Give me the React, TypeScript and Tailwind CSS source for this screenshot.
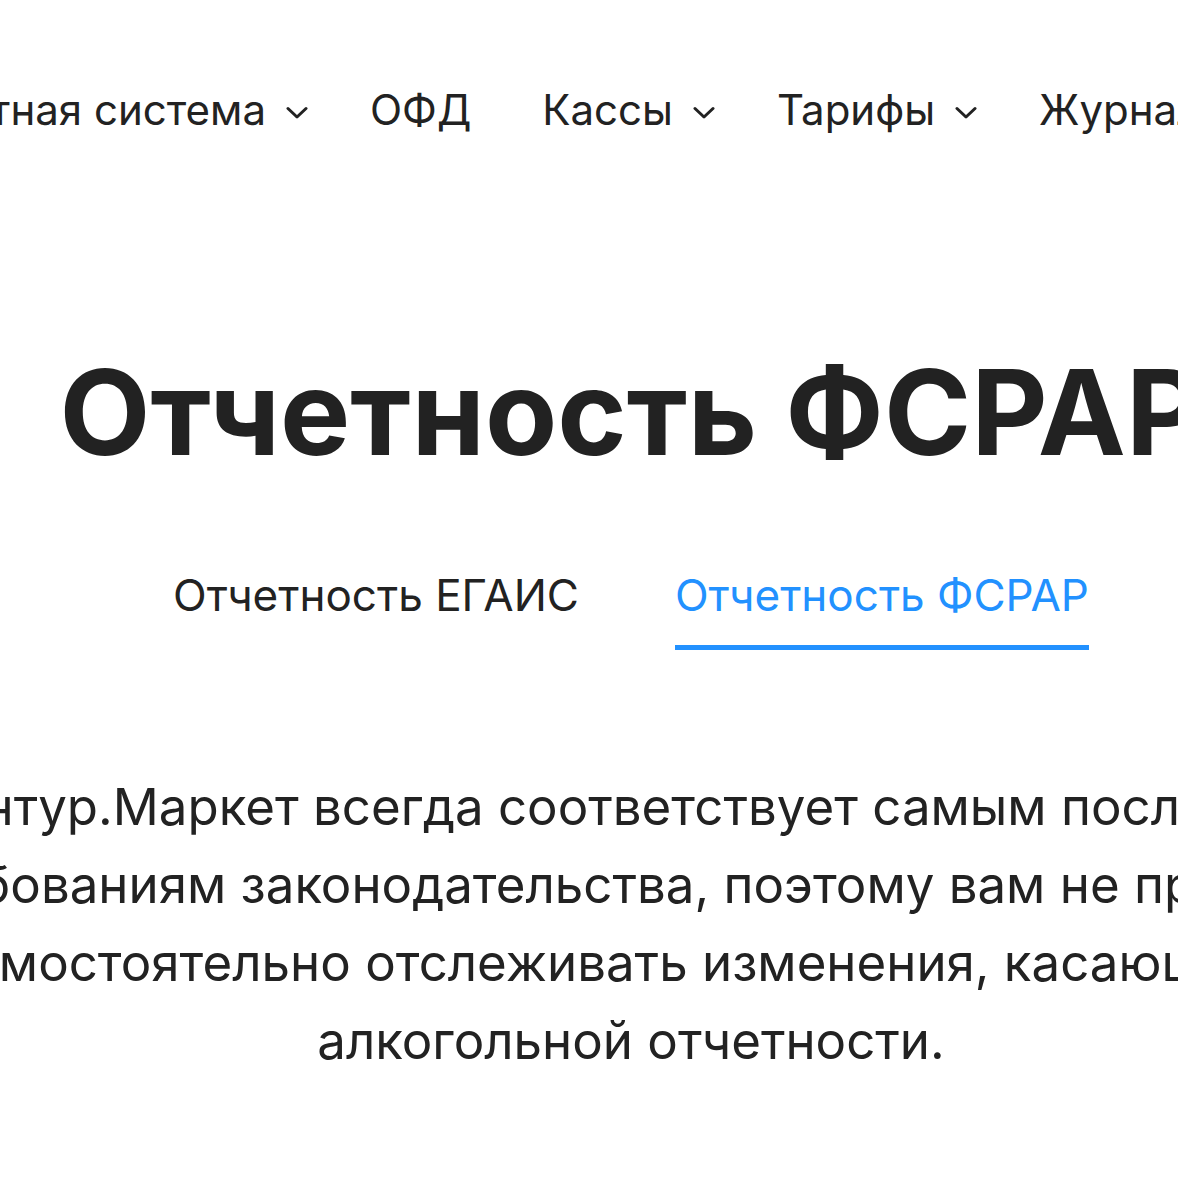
import React from "react";

function Chevron() {
  return (
    <svg width="22" height="14" viewBox="0 0 22 14" fill="none" className="mt-[6px] shrink-0">
      <path d="M2 2.5L11 11L20 2.5" stroke="#222222" strokeWidth="3" strokeLinecap="round" strokeLinejoin="round" />
    </svg>
  );
}

const navItems = [
  { label: "Учетная система", dropdown: true },
  { label: "ОФД", dropdown: false },
  { label: "Кассы", dropdown: true },
  { label: "Тарифы", dropdown: true },
  { label: "Журнал", dropdown: false },
];

export default function App() {
  return (
    <div
      className="relative w-[1178px] h-[1178px] overflow-hidden bg-white text-[#222222]"
      style={{ fontFamily: "Inter, 'Noto Sans', sans-serif" }}
    >
      <nav className="flex items-center gap-[62px] pt-[85px] ml-[-82px] whitespace-nowrap">
        {navItems.map((item) => (
          <div
            key={item.label}
            className={`flex items-center gap-[20px] text-[42px] leading-[50px] ${
              item.label === "ОФД" ? "pr-[9px]" : ""
            }`}
          >
            <span>{item.label}</span>
            {item.dropdown && <Chevron />}
          </div>
        ))}
      </nav>

      <div className="w-[1800px] ml-[-269px] flex flex-col items-center">
        <h1 className="mt-[206px] text-[118px] leading-[142px] font-bold whitespace-nowrap">
          Отчетность ФСРАР
        </h1>

        <div className="mt-[86px] flex gap-[96px] text-[44px] leading-[52px] whitespace-nowrap">
          <div className="pb-[24px] border-b-[5px] border-transparent">Отчетность ЕГАИС</div>
          <div className="pb-[24px] border-b-[5px] border-[#2291ff] text-[#2291ff]">Отчетность ФСРАР</div>
        </div>

        <p className="mt-[118px] text-center text-[51px] leading-[78px] whitespace-nowrap">
          Контур.Маркет всегда соответствует самым последним
          <br />
          требованиям законодательства, поэтому вам не придется
          <br />
          самостоятельно отслеживать изменения, касающиеся
          <br />
          алкогольной отчетности.
        </p>
      </div>
    </div>
  );
}
